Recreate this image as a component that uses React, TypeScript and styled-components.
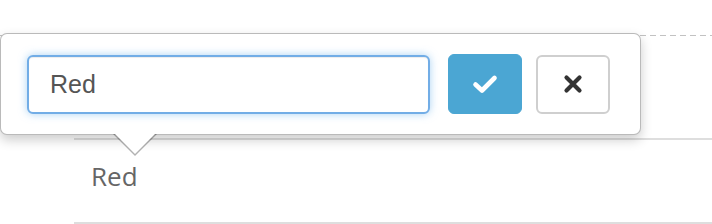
import styled, { createGlobalStyle } from "styled-components";

const GlobalStyle = createGlobalStyle`
  html, body {
    margin: 0;
    padding: 0;
    background: #fff;
  }
`;

const Page = styled.div`
  position: relative;
  width: 712px;
  height: 224px;
  overflow: hidden;
  font-family: "Open Sans", "Liberation Sans", sans-serif;
`;

const TopRule = styled.div`
  height: 35px;
  border-bottom: 1px solid transparent;
  background: repeating-linear-gradient(
      to right,
      #c2c2c2 0,
      #c2c2c2 6px,
      transparent 6px,
      transparent 10px
    )
    bottom left / 100% 1px no-repeat;
  background-origin: border-box;
`;

const Table = styled.div`
  margin-left: 74px;
  padding-top: 102px;
`;

const Row = styled.div`
  box-sizing: border-box;
  height: 86px;
  border-top: 2px solid #dedede;
  border-bottom: 2px solid #dedede;
  padding: 21px 0 0 17px;
  font-size: 26px;
  line-height: 30px;
  color: #666;
`;

const Popover = styled.div`
  position: absolute;
  left: 0;
  top: 33px;
  box-sizing: border-box;
  width: 641px;
  height: 102px;
  padding: 0 0 0 26px;
  display: flex;
  align-items: center;
  background: #fff;
  border: 1px solid rgba(0, 0, 0, 0.27);
  border-radius: 7px;
  box-shadow: 0 5px 12px rgba(0, 0, 0, 0.2);
`;

const Arrow = styled.div`
  position: absolute;
  left: 112px;
  bottom: -22px;
  width: 0;
  height: 0;
  border-left: 22px solid transparent;
  border-right: 22px solid transparent;
  border-top: 22px solid rgba(0, 0, 0, 0.3);

  &::after {
    content: "";
    position: absolute;
    left: -21px;
    top: -23px;
    border-left: 21px solid transparent;
    border-right: 21px solid transparent;
    border-top: 21px solid #fff;
  }
`;

const Form = styled.form`
  display: flex;
  align-items: center;
  margin: 0;
`;

const Input = styled.input`
  box-sizing: border-box;
  width: 403px;
  height: 59px;
  padding: 0 21px;
  border: 2px solid #72ade6;
  border-radius: 6px;
  outline: none;
  box-shadow: inset 0 1px 1px rgba(0, 0, 0, 0.075),
    0 0 9px rgba(102, 175, 233, 0.55);
  font-family: "Liberation Sans", Arial, sans-serif;
  font-size: 25px;
  color: #555;
  background: #fff;
`;

const Button = styled.button<{ $primary?: boolean }>`
  box-sizing: border-box;
  width: 74px;
  height: ${({ $primary }) => ($primary ? "60px" : "59px")};
  margin-left: ${({ $primary }) => ($primary ? "18px" : "14px")};
  display: flex;
  align-items: center;
  justify-content: center;
  padding: 0;
  border-radius: 6px;
  border: ${({ $primary }) =>
    $primary ? "1px solid #4ba6d3" : "2px solid #cfcfcf"};
  background: ${({ $primary }) => ($primary ? "#4ba6d3" : "#fff")};
  color: ${({ $primary }) => ($primary ? "#fff" : "#333")};
  cursor: pointer;
`;

const CheckIcon = () => (
  <svg width="26" height="20" viewBox="0 0 26 20">
    <polyline
      points="3.5,10.5 10,16.5 22.5,4"
      fill="none"
      stroke="currentColor"
      strokeWidth="4.6"
      strokeLinecap="round"
      strokeLinejoin="round"
    />
  </svg>
);

const CloseIcon = () => (
  <svg width="20" height="20" viewBox="0 0 20 20">
    <path
      d="M3.5 3.5 L16.5 16.5 M16.5 3.5 L3.5 16.5"
      fill="none"
      stroke="currentColor"
      strokeWidth="4.2"
      strokeLinecap="round"
    />
  </svg>
);

const App = () => {
  return (
    <>
      <GlobalStyle />
      <Page>
        <TopRule />
        <Table>
          <Row>Red</Row>
        </Table>
        <Popover>
          <Form onSubmit={(e) => e.preventDefault()}>
            <Input defaultValue="Red" />
            <Button type="submit" $primary>
              <CheckIcon />
            </Button>
            <Button type="button">
              <CloseIcon />
            </Button>
          </Form>
          <Arrow />
        </Popover>
      </Page>
    </>
  );
};

export default App;
